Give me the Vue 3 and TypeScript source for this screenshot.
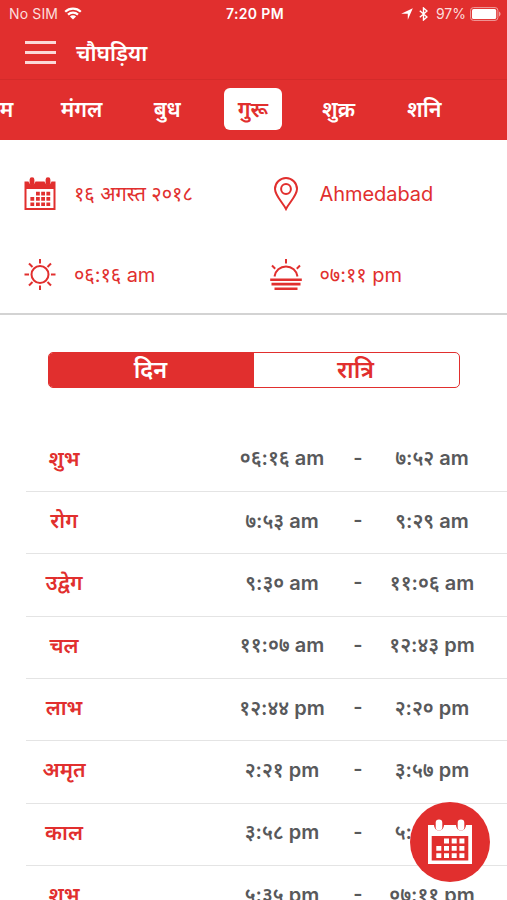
<script setup lang="ts">
import { ref } from 'vue'

interface Period {
  name: string
  start: string
  end: string
}

const days: string[] = ['सोम', 'मंगल', 'बुध', 'गुरू', 'शुक्र', 'शनि']
const activeDay = ref(3)
const parts: string[] = ['दिन', 'रात्रि']
const activePart = ref(0)

const periods: Period[] = [
  { name: 'शुभ', start: '०६:१६ am', end: '७:५२ am' },
  { name: 'रोग', start: '७:५३ am', end: '९:२९ am' },
  { name: 'उद्वेग', start: '९:३० am', end: '११:०६ am' },
  { name: 'चल', start: '११:०७ am', end: '१२:४३ pm' },
  { name: 'लाभ', start: '१२:४४ pm', end: '२:२० pm' },
  { name: 'अमृत', start: '२:२१ pm', end: '३:५७ pm' },
  { name: 'काल', start: '३:५८ pm', end: '५:३४ pm' },
  { name: 'शुभ', start: '५:३५ pm', end: '०७:११ pm' },
]
</script>

<template>
  <div class="screen">
    <header class="header">
      <div class="status">
        <div class="status-left">
          <span>No SIM</span>
          <svg class="wifi" viewBox="0 0 18 13">
            <path d="M1.2 4.7a11.2 11.2 0 0 1 15.6 0" />
            <path d="M4 7.6a7.2 7.2 0 0 1 10 0" />
            <path class="solid" d="M9 12.6 5.9 9.5a4.4 4.4 0 0 1 6.2 0z" />
          </svg>
        </div>
        <span class="clock">7:20 PM</span>
        <div class="status-right">
          <svg class="location" viewBox="0 0 12 12"><path d="M11.8.2 6.8 11.8V5.8H.2z" /></svg>
          <svg class="bluetooth" viewBox="0 0 9 14">
            <path d="M.8 3.8 8 10 4.5 13V1L8 4 .8 10.2" />
          </svg>
          <span>97%</span>
          <svg class="battery" viewBox="0 0 31 14">
            <rect class="shell" x=".6" y=".6" width="27.3" height="12.8" rx="2.8" />
            <rect class="charge" x="2" y="2" width="24.2" height="10" rx="1.6" />
            <path class="cap" d="M29 4.6c2 .8 2 4 0 4.8z" />
          </svg>
        </div>
      </div>
      <div class="navbar">
        <button class="menu" aria-label="मेनू"><i></i><i></i><i></i></button>
        <h1>चौघड़िया</h1>
      </div>
    </header>

    <nav class="days">
      <div v-for="(day, i) in days" :key="day" class="day-cell">
        <button class="day" :class="{ active: i === activeDay }" @click="activeDay = i">{{ day }}</button>
      </div>
    </nav>

    <section class="info">
      <div class="info-item">
        <svg class="icon" viewBox="0 0 32 34">
          <path class="fill" fill-rule="evenodd" d="M.5 4.500h4a3.700 4.500 0 0 0 7 0h9a3.700 4.500 0 0 0 7 0h4V33H.5zM2.500 12v19h27V12z" />
          <rect class="fill" x="5.600" y=".3" width="4.800" height="7.900" rx="2.400" />
          <rect class="fill" x="21.600" y=".3" width="4.800" height="7.900" rx="2.400" />
          <path class="fill" d="M12 14.800h3.800v3.600H12zm5.200 0H21v3.600h-3.800zm5.200 0h3.800v3.600h-3.800zM6.400 20.100h3.800v3.600H6.400zm5.600 0h3.800v3.600H12zm5.200 0H21v3.600h-3.800zm5.200 0h3.800v3.600h-3.800zM6.400 25.400h3.800V29H6.400zm5.600 0h3.800V29H12zm5.200 0H21V29h-3.800zm5.200 0h3.800V29h-3.800z" />
        </svg>
        <span class="label">१६ अगस्त २०१८</span>
      </div>
      <div class="info-item">
        <svg class="icon pin" viewBox="0 0 32 34">
          <path class="line" d="M16 32C13 26 5 18.500 5 12a11 11 0 0 1 22 0C27 18.500 19 26 16 32z" />
          <circle class="line" cx="16" cy="12" r="4.900" />
        </svg>
        <span class="label">Ahmedabad</span>
      </div>
      <div class="info-item">
        <svg class="icon" viewBox="0 0 32 34">
          <circle class="line" cx="16" cy="16.500" r="8.500" />
          <path class="line" d="M16 1v4.500M16 27.500V32M.5 16.500H5M27 16.500h4.500M5 5.500l3.500 3.500M23.500 24l3.500 3.500M27 5.500 23.500 9M8.500 24 5 27.500" />
        </svg>
        <span class="label">०६:१६ am</span>
      </div>
      <div class="info-item">
        <svg class="icon" viewBox="0 0 32 34">
          <path class="line" d="M16 1v4.500M2 7.500l3.200 3.200M30 7.500l-3.200 3.200M4.500 18.500a11.600 11.600 0 0 1 23 0" />
          <path class="line bar" d="M.2 21.700h31.600M1.500 26.100h29M4.500 30.700h23" />
        </svg>
        <span class="label">०७:११ pm</span>
      </div>
    </section>

    <main class="content">
      <div class="segment">
        <button
          v-for="(part, i) in parts"
          :key="part"
          :class="{ active: i === activePart }"
          @click="activePart = i"
        >{{ part }}</button>
      </div>
      <ul class="periods">
        <li v-for="(p, i) in periods" :key="i">
          <span class="name">{{ p.name }}</span>
          <span class="time start">{{ p.start }}</span>
          <span class="time">-</span>
          <span class="time">{{ p.end }}</span>
        </li>
      </ul>
    </main>

    <button class="fab" aria-label="तारीख">
      <svg viewBox="0 0 44 46">
        <path class="paper" fill-rule="evenodd" d="M0 6h6a5 5.500 0 0 0 10 0h12a5 5.500 0 0 0 10 0h6v39H0zM3.700 17v24.500h36.600V17z" />
        <rect class="paper" x="7.700" y=".5" width="6.600" height="11" rx="3.300" />
        <rect class="paper" x="29.700" y=".5" width="6.600" height="11" rx="3.300" />
        <path class="paper" d="M16 19.500h5v5h-5zm7.700 0h5v5h-5zm7.700 0h5v5h-5zM8.300 27h5v4.800h-5zm7.700 0h5v4.800h-5zm7.700 0h5v4.800h-5zm7.700 0h5v4.800h-5zM8.300 34.300h5v4.800h-5zm7.700 0h5v4.800h-5zm7.700 0h5v4.800h-5zm7.700 0h5v4.800h-5z" />
      </svg>
    </button>
  </div>
</template>

<style>
body {
  margin: 0;
}
</style>

<style scoped>
.screen {
  position: relative;
  width: 507px;
  height: 900px;
  overflow: hidden;
  background: #fff;
  color: #e12f2e;
  font-family: Inter, 'Noto Sans', sans-serif;
}

button {
  margin: 0;
  padding: 0;
  border: 0;
  background: none;
  color: inherit;
  font: inherit;
}

svg {
  display: block;
  flex: none;
}

.header {
  box-sizing: border-box;
  height: 80px;
  border-bottom: 1px solid #d42b2a;
  background: #e12f2e;
  color: #fff;
}

.status {
  display: grid;
  grid-template-columns: 1fr auto 1fr;
  align-items: center;
  height: 27px;
  padding: 0 6px 0 9px;
  font-size: 14px;
  line-height: 27px;
}

.status-left,
.status-right {
  display: flex;
  align-items: center;
  color: #fbdedd;
}

.status-left {
  letter-spacing: 0.15px;
}

.status-right {
  justify-content: flex-end;
}

.wifi {
  width: 18px;
  height: 13px;
  margin-left: 6px;
  fill: none;
  stroke: #fff;
  stroke-width: 2.2;
}

.wifi .solid {
  fill: #fff;
  stroke: none;
}

.clock {
  font-weight: 600;
  letter-spacing: 0.35px;
}

.location {
  width: 12px;
  height: 12px;
  margin-right: 6px;
  fill: #fff;
}

.bluetooth {
  width: 9px;
  height: 14px;
  margin-right: 8px;
  fill: none;
  stroke: #fff;
  stroke-width: 1.4;
}

.battery {
  width: 31px;
  height: 14px;
  margin-left: 4px;
}

.shell {
  fill: none;
  stroke: #f0a09f;
  stroke-width: 1;
}

.charge {
  fill: #fff;
}

.cap {
  fill: #f0a09f;
}

.navbar {
  display: flex;
  align-items: center;
  gap: 20px;
  height: 50px;
  padding-left: 25px;
}

.menu {
  display: grid;
  gap: 7px;
  width: 31px;
}

.menu i {
  height: 3px;
  background: #fbd9d8;
}

.navbar h1 {
  margin: 2px 0 0;
  font-size: 21.5px;
  font-weight: 600;
  line-height: 30px;
}

.days {
  display: flex;
  height: 60px;
  margin-left: -47px;
  background: #e12f2e;
  color: #fff;
}

.day-cell {
  display: flex;
  flex: 0 0 85.7px;
  align-items: center;
  justify-content: center;
}

.day-cell:first-child {
  text-indent: -2px;
}

.day {
  width: 58px;
  height: 42px;
  margin-bottom: 2px;
  border-radius: 6px;
  font-size: 21.5px;
  font-weight: 600;
  line-height: 43px;
  white-space: nowrap;
}

.day.active {
  background: #fff;
  color: #e12f2e;
}

.info {
  display: grid;
  box-sizing: border-box;
  grid-template-columns: 245.5px 1fr;
  grid-auto-rows: 81px;
  height: 175px;
  padding: 13px 0 0 24px;
  border-bottom: 2px solid #d3d3d3;
  font-size: 20px;
}

.info-item {
  display: flex;
  align-items: center;
  gap: 18px;
}

.label {
  letter-spacing: -0.05px;
}

.icon {
  width: 32px;
  height: 34px;
}

.icon .fill {
  fill: #e12f2e;
}

.icon .line {
  fill: none;
  stroke: #e12f2e;
  stroke-width: 2;
}

.icon .bar {
  stroke-width: 2.6;
}

.segment {
  display: grid;
  box-sizing: border-box;
  grid-template-columns: 1fr 1fr;
  width: 412px;
  height: 36px;
  margin: 36.5px 0 42px 48px;
  overflow: hidden;
  border: 1.5px solid #e12f2e;
  border-radius: 5px;
  font-size: 23.5px;
  font-weight: 600;
  line-height: 34px;
}

.segment button {
  padding-right: 2px;
}

.segment .active {
  background: #e12f2e;
  color: #fff;
}

.periods {
  margin: 0 0 0 26px;
  padding: 0;
  list-style: none;
}

.periods li {
  display: grid;
  box-sizing: border-box;
  grid-template-columns: 76px 120px 120px 32px 116px;
  align-items: center;
  height: 62.35px;
  padding-bottom: 5px;
  border-bottom: 1px solid #e4e4e4;
  text-align: center;
  white-space: nowrap;
}

.name {
  font-size: 21px;
  font-weight: 600;
}

.time {
  color: #58595b;
  font-size: 20px;
  font-weight: 600;
}

.start {
  grid-column: 3;
}

.fab {
  position: absolute;
  top: 802px;
  left: 410px;
  display: grid;
  width: 80px;
  height: 80px;
  place-items: center;
  border-radius: 50%;
  background: #e12f2e;
}

.fab svg {
  width: 44px;
  height: 46px;
}

.paper {
  fill: #fff;
}
</style>
